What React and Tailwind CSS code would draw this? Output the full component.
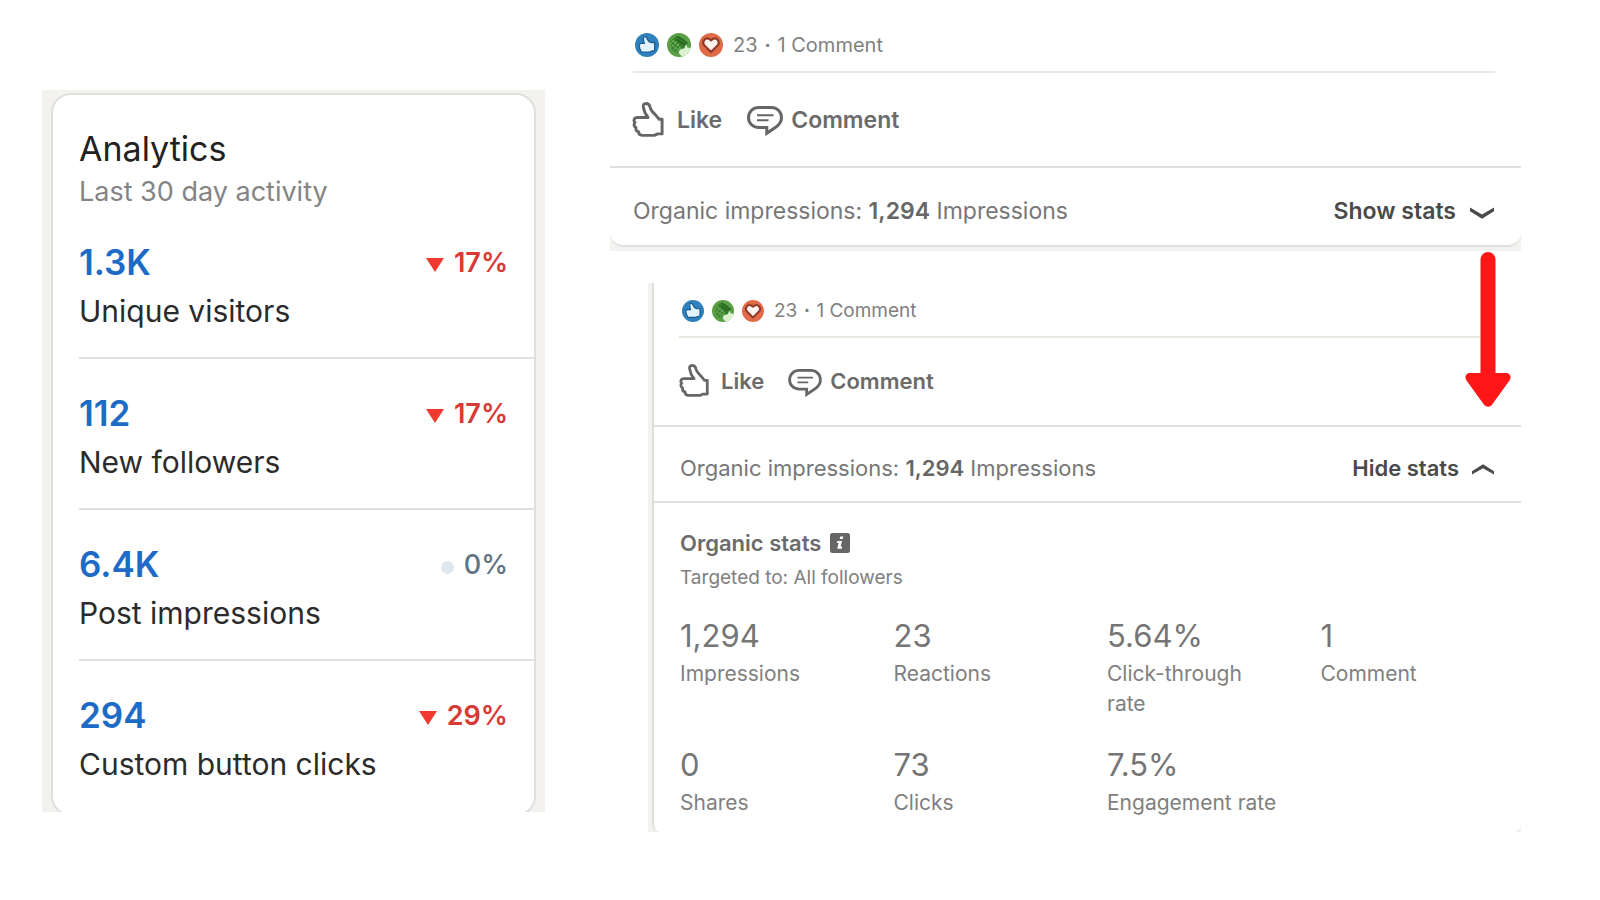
import React from 'react';

const metrics = [
  { value: '1.3K', label: 'Unique visitors', change: '17%', trend: 'down' },
  { value: '112', label: 'New followers', change: '17%', trend: 'down' },
  { value: '6.4K', label: 'Post impressions', change: '0%', trend: 'flat' },
  { value: '294', label: 'Custom button clicks', change: '29%', trend: 'down' },
];

const organicStats = [
  { value: '1,294', label: 'Impressions' },
  { value: '23', label: 'Reactions' },
  { value: '5.64%', label: 'Click-through rate' },
  { value: '1', label: 'Comment' },
  { value: '0', label: 'Shares' },
  { value: '73', label: 'Clicks' },
  { value: '7.5%', label: 'Engagement rate' },
];

const LikeBadge = ({ className }) => (
  <svg viewBox="0 0 24 24" className={className} aria-hidden="true">
    <circle cx="12" cy="12" r="12" fill="#2f80bb" />
    <path
      d="M8.600 4C10.300 3.200 11.700 4.200 12.200 6C12.700 7.600 14.200 9 16.200 9.600H19.600V17.600L16.600 18L15 19H7.800C6.200 19 5.400 17.900 5.500 16.700C4.600 16 4.300 15 4.700 14C3.700 12.600 4.300 10.800 6 10.500H9.300C8.800 8.700 8.200 6.800 8.600 4Z"
      fill="#e3f3fd"
      stroke="#175a91"
      strokeWidth="1.200"
    />
  </svg>
);

// Clapping hands on green
const CelebrateBadge = ({ className }) => (
  <svg viewBox="0 0 24 24" className={className} aria-hidden="true">
    <circle cx="12" cy="12" r="12" fill="#5a9f45" />
    <path d="M3 9L9 3L17 6L21 14L17 17L13 14L10 20L5 17Z" fill="#37802b" />
    <path
      d="M3 11L7 7M4.500 14L10 8M6.500 17L12 11M9 19L13 14M6 8L12 13M5 12L10 16"
      stroke="#78b563"
      strokeWidth="1"
      strokeLinecap="round"
      fill="none"
    />
    <path d="M11 3.500L20 10M10 7L18 12" stroke="#256320" strokeWidth="1.500" strokeLinecap="round" />
    <path
      d="M13.500 16.500L17.500 15.200L18.500 12C20 12 20.500 13 20.300 14.500L23.600 15A12 12 0 0 1 15 23.600L12 20.500C11.500 19 12.400 17.300 13.500 16.500Z"
      fill="#dcf2cf"
    />
  </svg>
);

const LoveBadge = ({ className }) => (
  <svg viewBox="0 0 24 24" className={className} aria-hidden="true">
    <circle cx="12" cy="12" r="12" fill="#df6b47" />
    <path
      d="M12 19L5.200 12.300C2.400 9 6.200 3.800 10.400 6.100L12 7.300L13.600 6.100C17.800 3.800 21.600 9 18.800 12.300Z"
      fill="#fff3ee"
      stroke="#93392a"
      strokeWidth="2.200"
      strokeLinejoin="round"
    />
  </svg>
);

const ThumbIcon = ({ className }) => (
  <svg viewBox="0 0 32 36" className={className} fill="none" aria-hidden="true">
    <path
      d="M16 16H5C1.500 16 .8 19.500 2.600 21C1 23 1.600 25.500 3.600 26.200C3.200 28.300 4.400 30 6.200 30.400C6.300 32.800 8 34.300 10 34.300H22.500L26 32.800H30.500V17.800H27.500L23.500 13C21 10.500 18.800 8.500 18.200 5.500C17.700 2.600 16 1.500 14 1.500C11.800 1.500 10.800 3 11.200 5.200C11.800 9 13 12.500 16 16Z"
      stroke="#666"
      strokeWidth="3"
      strokeLinejoin="round"
    />
  </svg>
);

const CommentIcon = ({ className }) => (
  <svg viewBox="0 0 36 30" className={className} fill="none" aria-hidden="true">
    <path
      d="M12 1.500H24C30.500 1.500 34.500 6 34.500 11.500C34.500 15.500 32.500 18.500 29 21L19.800 27.300V21.500H12C5.500 21.500 1.500 17 1.500 11.500C1.500 6 5.500 1.500 12 1.500Z"
      stroke="#666"
      strokeWidth="3"
    />
    <path d="M10 9.300H26.500M10 14.300H21.500" stroke="#666" strokeWidth="2" />
  </svg>
);

const Chevron = ({ className }) => (
  <svg viewBox="0 0 24 12" className={className} aria-hidden="true">
    <path d="M0 .5L12 7.500L24 .5V4.200L12 11.800L0 4.200Z" fill="#4a4a4a" />
  </svg>
);

const Metric = ({ value, label, change, trend }) => (
  <li className="pt-8 pb-[26px] border-b-2 border-[#dfdfdf] first:pt-[30px] last:border-b-0">
    <div className="flex items-center justify-between h-11 pr-[26px] leading-[44px]">
      <a href="#" className="text-[35px] font-semibold text-[#1d6bc6]">
        {value}
      </a>
      <span
        className={`flex items-center gap-[10px] pt-[2px] text-[27px] ${
          trend === 'down' ? 'font-semibold text-[#d83a35]' : 'font-medium text-[#627282]'
        }`}
      >
        {trend === 'down' ? (
          <svg viewBox="0 0 18 14" className="w-[18px] h-[14px] mt-1" aria-hidden="true">
            <path d="M0 0H18L9 14Z" fill="#f03a30" />
          </svg>
        ) : (
          <span className="w-[13px] h-[13px] mt-1 rounded-full bg-[#dfe7ef]" />
        )}
        {change}
      </span>
    </div>
    <p className="mt-[7px] text-[30px] leading-10 text-[#2b2b2b]">{label}</p>
  </li>
);

const AnalyticsCard = () => (
  <section className="bg-[#f3f2ef] pt-[3px] pl-[9px] pr-[9px] overflow-hidden">
    <div className="-mb-1 pt-[34px] pb-1 pl-[26px] bg-white border-2 border-[#e0dfdd] rounded-[20px]">
      <h1 className="text-[34px] leading-10 text-[#222]">Analytics</h1>
      <p className="mt-[5px] text-[27px] leading-9 text-[#848484]">Last 30 day activity</p>
      <ul>
        {metrics.map((m) => (
          <Metric key={m.label} {...m} />
        ))}
      </ul>
    </div>
  </section>
);

const ShowStatsPost = () => (
  <section className="bg-[#f3f2ef] pb-1">
    <div className="pt-[33px] bg-white border-b-2 border-[#e0dfdd] rounded-b-[14px]">
      <div className="ml-[23px] mr-[26px] pb-[14px] flex items-center border-b-2 border-[#ebe8e4]">
        <div className="flex gap-2 ml-[2px] mr-[10px]">
          <LikeBadge className="w-6 h-6" />
          <CelebrateBadge className="w-6 h-6" />
          <LoveBadge className="w-6 h-6" />
        </div>
        <span className="text-[20px] leading-6 text-[#808080]">
          23 <span className="mx-px font-bold">·</span> 1 Comment
        </span>
      </div>
      <div className="h-[93px] pt-[2px] px-[22px] flex items-center gap-[25px] text-[23px] font-semibold text-[#6b6b6b]">
        <button className="flex items-center gap-[13px]">
          <ThumbIcon className="w-8 h-[35px] mb-[3px]" />
          Like
        </button>
        <button className="flex items-center gap-2">
          <CommentIcon className="w-9 h-[30px]" />
          Comment
        </button>
      </div>
      <div className="h-[79px] pt-[9px] pl-[23px] pr-[27px] flex items-center justify-between border-t-2 border-[#e0e0e0] text-[23px] text-[#777]">
        <p>
          Organic impressions: <b className="font-semibold text-[#666]">1,294</b> Impressions
        </p>
        <button className="flex items-center gap-[14px] font-semibold text-[#4a4a4a]">
          Show stats
          <Chevron className="w-6 h-3 mt-1" />
        </button>
      </div>
    </div>
  </section>
);

const HideStatsPost = () => (
  <section className="mt-8 ml-[38px] pl-1 bg-[#f3f2ef]">
    <div className="pt-4 bg-white border-l-2 border-[#e0dfdd] rounded-b-[8px]">
      <div className="ml-[25px] mr-[26px] pb-[13px] flex items-center border-b-2 border-[#ebe8e4]">
        <div className="flex gap-2 ml-[3px] mr-[10px]">
          <LikeBadge className="w-[22px] h-[22px]" />
          <CelebrateBadge className="w-[22px] h-[22px]" />
          <LoveBadge className="w-[22px] h-[22px]" />
        </div>
        <span className="text-[19px] leading-6 text-[#808080]">
          23 <span className="mx-px font-bold">·</span> 1 Comment
        </span>
      </div>
      <div className="h-[87px] px-[25px] flex items-center gap-6 text-[22px] font-semibold text-[#6b6b6b]">
        <button className="flex items-center gap-3">
          <ThumbIcon className="w-[30px] h-[33px] mb-[2px]" />
          Like
        </button>
        <button className="flex items-center gap-2">
          <CommentIcon className="w-[34px] h-[28px] mt-[2px]" />
          Comment
        </button>
      </div>
      <div className="h-[78px] pt-2 pl-[26px] pr-[27px] flex items-center justify-between border-y-2 border-[#e0e0e0] text-[22px] text-[#777]">
        <p>
          Organic impressions: <b className="font-semibold text-[#666]">1,294</b> Impressions
        </p>
        <button className="flex items-center gap-[13px] font-semibold text-[#4a4a4a]">
          Hide stats
          <Chevron className="w-[22px] h-[11px] mt-[2px] rotate-180" />
        </button>
      </div>
      <div className="pt-[25px] pb-[14px] pl-[26px] pr-[26px]">
        <h2 className="flex items-center gap-[9px] text-[22px] leading-[30px] font-semibold text-[#6b6b6b]">
          Organic stats
          <svg viewBox="0 0 20 20" className="w-5 h-5" aria-hidden="true">
            <rect width="20" height="20" rx="2.500" fill="#666" />
            <path d="M10.300 3.500H13.300L12.700 6H9.700ZM7.300 8H12L10.600 13.500H12.200L11.800 15.800H7.200L8.600 10H6.800Z" fill="#fff" />
          </svg>
        </h2>
        <p className="mt-[6px] text-[19px] leading-7 text-[#808080]">Targeted to: All followers</p>
        <dl className="mt-6 grid grid-cols-4 gap-x-[39px] gap-y-[26px]">
          {organicStats.map((s) => (
            <div key={s.label} className="flex flex-col-reverse justify-end">
              <dt className="mt-[3px] text-[21px] leading-[30px] text-[#808080]">{s.label}</dt>
              <dd className="text-[31px] leading-10 text-[#757575]">{s.value}</dd>
            </div>
          ))}
        </dl>
      </div>
    </div>
  </section>
);

// Red pointer from "Show stats" to the opened stats
const Arrow = () => (
  <svg viewBox="0 0 46 156" className="absolute top-[251px] right-[10px] w-[46px] h-[156px]" aria-hidden="true">
    <path
      d="M15.500 8.500a7.500 7.500 0 0 1 15 0V122H41c4 0 6 4 3.500 7.500L27.500 153c-2 3.500-6.500 3.500-9 0L1.500 129.500C-1 126 1 122 5 122H15.500Z"
      fill="#ff1616"
    />
  </svg>
);

const App = () => {
  return (
    <main className="grid grid-cols-[503fr_911fr] items-start gap-x-[65px] pl-[42px] pr-[79px] bg-white font-['Inter',sans-serif]">
      <div className="pt-[90px]">
        <AnalyticsCard />
      </div>
      <div className="relative">
        <ShowStatsPost />
        <HideStatsPost />
        <Arrow />
      </div>
    </main>
  );
};

export default App;
